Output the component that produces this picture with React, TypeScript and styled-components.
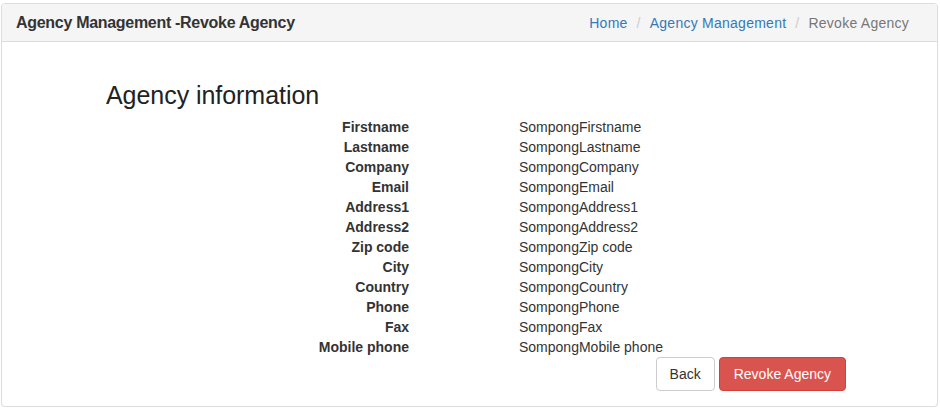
import React from "react";
import styled, { createGlobalStyle } from "styled-components";

const GlobalStyle = createGlobalStyle`
  html, body { margin: 0; padding: 0; background: #fff; }
  body {
    font-family: "Liberation Sans", Arial, sans-serif;
    font-size: 14px;
    line-height: 20px;
    color: #333;
  }
  * { box-sizing: border-box; }
`;

const Panel = styled.div`
  margin: 3px 0 0 1px;
  width: 937px;
  height: 404px;
  border: 1px solid #ddd;
  border-radius: 4px;
  background: #fff;
  box-shadow: 0 1px 1px rgba(0, 0, 0, 0.05);
  display: flex;
  flex-direction: column;
`;

const PanelHeading = styled.div`
  display: flex;
  justify-content: space-between;
  align-items: center;
  height: 38px;
  padding: 0 15px 0 14px;
  background: #f5f5f5;
  border-bottom: 1px solid #ddd;
  border-radius: 3px 3px 0 0;
`;

const PanelTitle = styled.h3`
  margin: 0;
  font-size: 16px;
  font-weight: 700;
  letter-spacing: -0.3px;
  color: #333;
`;

const Breadcrumb = styled.ol`
  display: flex;
  margin: 0;
  padding: 0 13px 0 0;
  list-style: none;
  font-size: 14px;
  letter-spacing: 0.25px;

  li + li::before {
    content: "/";
    color: #ccc;
    padding: 0 9px 0 9px;
  }
`;

const Crumb = styled.li<{ $active?: boolean }>`
  color: ${(p) => (p.$active ? "#777" : "#337ab7")};
`;

const PanelBody = styled.div`
  padding: 15px;
  display: flex;
  flex-direction: column;
`;

const SectionTitle = styled.h3`
  margin: 25px 0 9px 89px;
  font-size: 25px;
  font-weight: 500;
  line-height: 26px;
  color: #222;
  letter-spacing: -0.05px;
`;

const DetailList = styled.dl`
  display: grid;
  grid-template-columns: 392px 1fr;
  column-gap: 110px;
  margin: 0;
`;

const Label = styled.dt`
  text-align: right;
  font-weight: 700;
`;

const Value = styled.dd`
  margin: 0;
`;

const Actions = styled.div`
  display: flex;
  justify-content: flex-end;
  gap: 4px;
  margin-right: 76px;
`;

const Button = styled.button<{ $variant?: "danger" }>`
  height: 34px;
  padding: ${(p) => (p.$variant === "danger" ? "6px 14px" : "6px 13px")};
  font-family: inherit;
  font-size: 14px;
  line-height: 20px;
  border-radius: 4px;
  border: 1px solid ${(p) => (p.$variant === "danger" ? "#d43f3a" : "#ccc")};
  background: ${(p) => (p.$variant === "danger" ? "#d9534f" : "#fff")};
  color: ${(p) => (p.$variant === "danger" ? "#fff" : "#333")};
  cursor: pointer;
`;

const fields: [string, string][] = [
  ["Firstname", "SompongFirstname"],
  ["Lastname", "SompongLastname"],
  ["Company", "SompongCompany"],
  ["Email", "SompongEmail"],
  ["Address1", "SompongAddress1"],
  ["Address2", "SompongAddress2"],
  ["Zip code", "SompongZip code"],
  ["City", "SompongCity"],
  ["Country", "SompongCountry"],
  ["Phone", "SompongPhone"],
  ["Fax", "SompongFax"],
  ["Mobile phone", "SompongMobile phone"],
];

export default function App() {
  return (
    <>
      <GlobalStyle />
      <Panel>
        <PanelHeading>
          <PanelTitle>Agency Management -Revoke Agency</PanelTitle>
          <Breadcrumb>
            <Crumb>Home</Crumb>
            <Crumb>Agency Management</Crumb>
            <Crumb $active>Revoke Agency</Crumb>
          </Breadcrumb>
        </PanelHeading>
        <PanelBody>
          <SectionTitle>Agency information</SectionTitle>
          <DetailList>
            {fields.map(([label, value]) => (
              <React.Fragment key={label}>
                <Label>{label}</Label>
                <Value>{value}</Value>
              </React.Fragment>
            ))}
          </DetailList>
          <Actions>
            <Button>Back</Button>
            <Button $variant="danger">Revoke Agency</Button>
          </Actions>
        </PanelBody>
      </Panel>
    </>
  );
}
